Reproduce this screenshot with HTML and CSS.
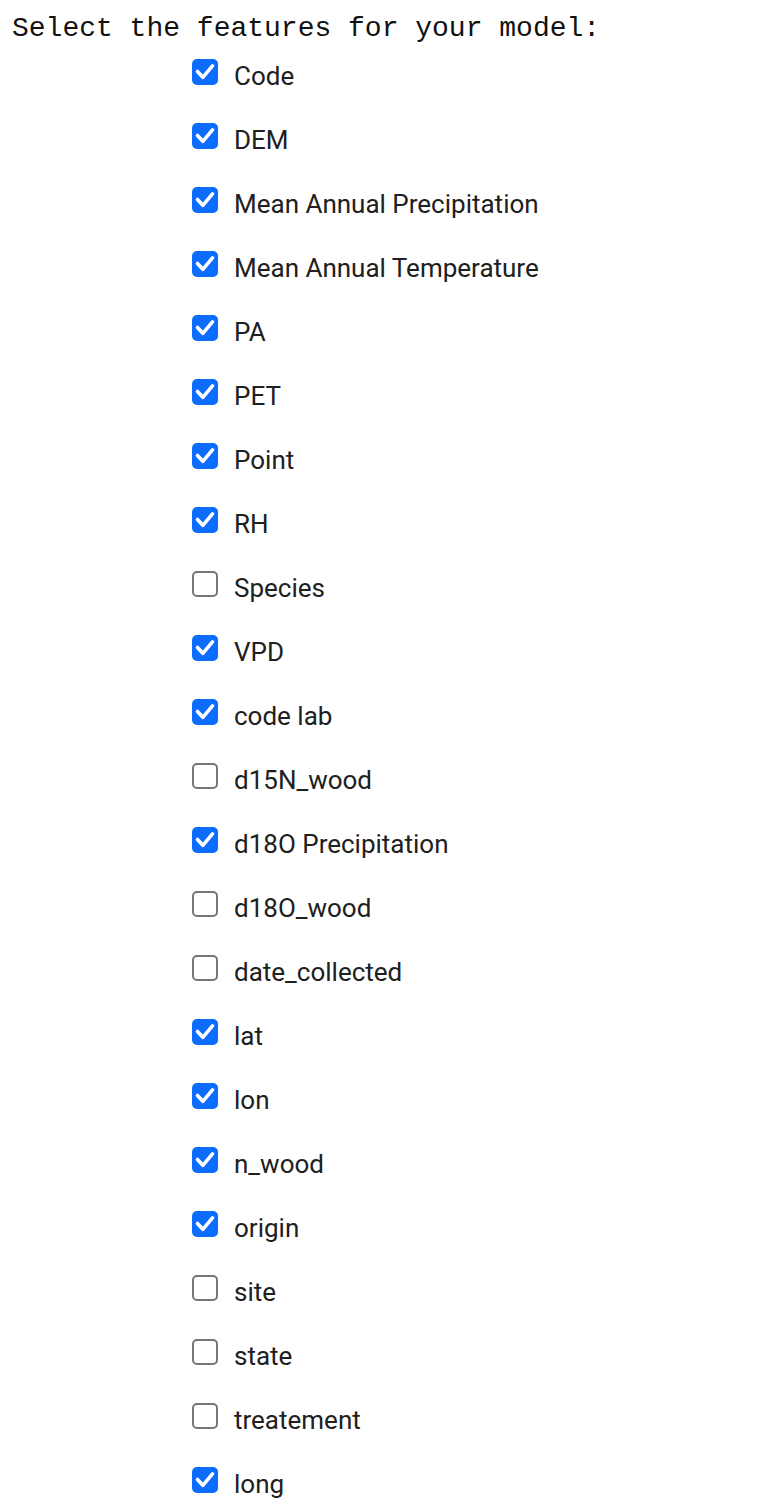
FILE: index.html
```html
<!DOCTYPE html>
<html>
<head>
<meta charset="utf-8">
<link rel="stylesheet" href="styles.css">
</head>
<body>
<div class="title">Select the features for your model:</div>
<div class="list">
  <div class="row"><span class="box on"><svg viewBox="0 0 26 26"><path d="M5.5 12.5 L10.8 18.3 L20.5 6.8"/></svg></span><span class="lbl">Code</span></div>
  <div class="row"><span class="box on"><svg viewBox="0 0 26 26"><path d="M5.5 12.5 L10.8 18.3 L20.5 6.8"/></svg></span><span class="lbl">DEM</span></div>
  <div class="row"><span class="box on"><svg viewBox="0 0 26 26"><path d="M5.5 12.5 L10.8 18.3 L20.5 6.8"/></svg></span><span class="lbl">Mean Annual Precipitation</span></div>
  <div class="row"><span class="box on"><svg viewBox="0 0 26 26"><path d="M5.5 12.5 L10.8 18.3 L20.5 6.8"/></svg></span><span class="lbl">Mean Annual Temperature</span></div>
  <div class="row"><span class="box on"><svg viewBox="0 0 26 26"><path d="M5.5 12.5 L10.8 18.3 L20.5 6.8"/></svg></span><span class="lbl">PA</span></div>
  <div class="row"><span class="box on"><svg viewBox="0 0 26 26"><path d="M5.5 12.5 L10.8 18.3 L20.5 6.8"/></svg></span><span class="lbl">PET</span></div>
  <div class="row"><span class="box on"><svg viewBox="0 0 26 26"><path d="M5.5 12.5 L10.8 18.3 L20.5 6.8"/></svg></span><span class="lbl">Point</span></div>
  <div class="row"><span class="box on"><svg viewBox="0 0 26 26"><path d="M5.5 12.5 L10.8 18.3 L20.5 6.8"/></svg></span><span class="lbl">RH</span></div>
  <div class="row"><span class="box"></span><span class="lbl">Species</span></div>
  <div class="row"><span class="box on"><svg viewBox="0 0 26 26"><path d="M5.5 12.5 L10.8 18.3 L20.5 6.8"/></svg></span><span class="lbl">VPD</span></div>
  <div class="row"><span class="box on"><svg viewBox="0 0 26 26"><path d="M5.5 12.5 L10.8 18.3 L20.5 6.8"/></svg></span><span class="lbl">code lab</span></div>
  <div class="row"><span class="box"></span><span class="lbl">d15N_wood</span></div>
  <div class="row"><span class="box on"><svg viewBox="0 0 26 26"><path d="M5.5 12.5 L10.8 18.3 L20.5 6.8"/></svg></span><span class="lbl">d18O Precipitation</span></div>
  <div class="row"><span class="box"></span><span class="lbl">d18O_wood</span></div>
  <div class="row"><span class="box"></span><span class="lbl">date_collected</span></div>
  <div class="row"><span class="box on"><svg viewBox="0 0 26 26"><path d="M5.5 12.5 L10.8 18.3 L20.5 6.8"/></svg></span><span class="lbl">lat</span></div>
  <div class="row"><span class="box on"><svg viewBox="0 0 26 26"><path d="M5.5 12.5 L10.8 18.3 L20.5 6.8"/></svg></span><span class="lbl">lon</span></div>
  <div class="row"><span class="box on"><svg viewBox="0 0 26 26"><path d="M5.5 12.5 L10.8 18.3 L20.5 6.8"/></svg></span><span class="lbl">n_wood</span></div>
  <div class="row"><span class="box on"><svg viewBox="0 0 26 26"><path d="M5.5 12.5 L10.8 18.3 L20.5 6.8"/></svg></span><span class="lbl">origin</span></div>
  <div class="row"><span class="box"></span><span class="lbl">site</span></div>
  <div class="row"><span class="box"></span><span class="lbl">state</span></div>
  <div class="row"><span class="box"></span><span class="lbl">treatement</span></div>
  <div class="row"><span class="box on"><svg viewBox="0 0 26 26"><path d="M5.5 12.5 L10.8 18.3 L20.5 6.8"/></svg></span><span class="lbl">long</span></div>
</div>
</body>
</html>
```
FILE: styles.css
```css
html, body {
  margin: 0;
  padding: 0;
  background: #ffffff;
}
body {
  padding-left: 8px;
}
.title {
  font-family: "Liberation Mono", "Courier New", monospace;
  font-size: 28px;
  line-height: 26px;
  height: 40px;
  box-sizing: border-box;
  padding-top: 16px;
  padding-left: 4px;
  color: #111111;
  white-space: nowrap;
}
.list {
  padding-left: 184px;
}
.row {
  display: flex;
  align-items: center;
  height: 64px;
  gap: 16px;
}
.box {
  width: 26px;
  height: 26px;
  box-sizing: border-box;
  border-radius: 5px;
  border: 2px solid #767676;
  background: #ffffff;
  flex: none;
}
.box.on {
  border: none;
  background: #0b6cfe;
}
.box svg {
  display: block;
  width: 26px;
  height: 26px;
}
.box svg path {
  fill: none;
  stroke: #ffffff;
  stroke-width: 3.6;
  stroke-linecap: round;
  stroke-linejoin: round;
}
.lbl {
  font-family: Roboto, "Noto Sans", sans-serif;
  font-size: 26px;
  line-height: 26px;
  color: #202020;
  position: relative;
  top: 4px;
}
```
